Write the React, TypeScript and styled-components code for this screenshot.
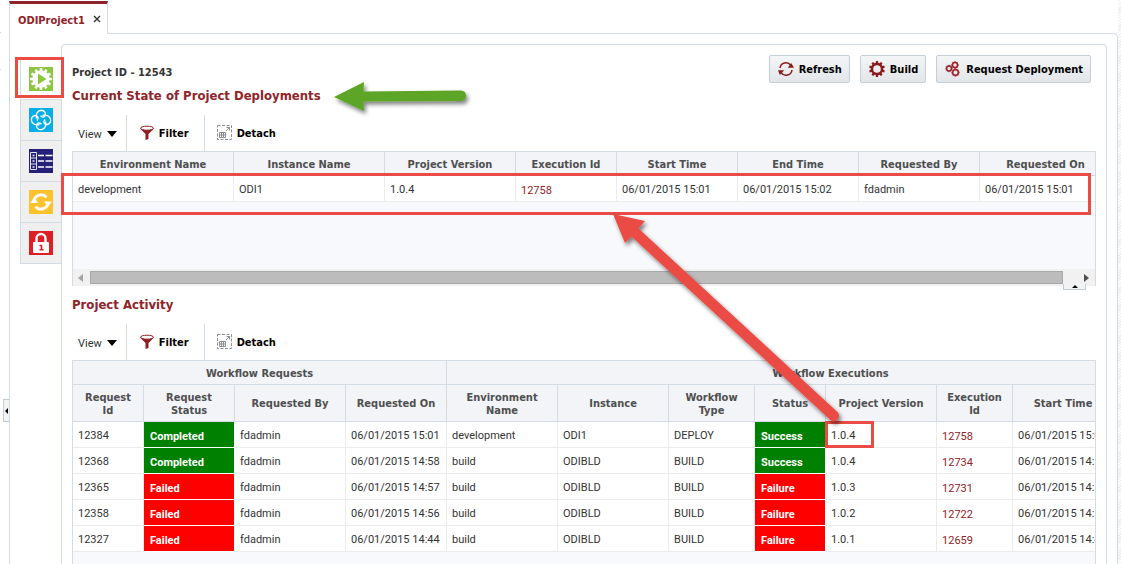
import React from "react";
import styled, { createGlobalStyle, css } from "styled-components";

const line = "#d3dce4";
const maroon = "#8f242a";
const alert = "#ea4b44";
const fonts = `Tahoma, "DejaVu Sans Condensed", "Noto Sans", sans-serif`;
const plainFonts = `Roboto, "Noto Sans", sans-serif`;

const GlobalStyle = createGlobalStyle`
  * { box-sizing: border-box; }
  body {
    margin: 0;
    background: #fff;
    color: #333;
    font: 11px/13px ${fonts};
  }
  button { font: inherit; color: inherit; cursor: pointer; }
`;

const Page = styled.div`
  display: grid;
  grid-template-columns: 9px minmax(0, 1fr) 3px;
  height: 100vh;
  overflow: hidden;
`;

const Gutter = styled.div`
  position: relative;
`;

const GutterPane = styled.div`
  width: 1px;
  height: 38px;
  margin-top: 32px;
  border: solid ${line};
  border-width: 1px 0;
`;

const Collapse = styled.button`
  position: absolute;
  top: 399px;
  right: 0;
  width: 6px;
  height: 23px;
  padding: 0;
  display: flex;
  align-items: center;
  justify-content: center;
  border: 1px solid #c4ccd3;
  border-right: 0;
  background: #f1f3f5;
`;

const Edge = styled.div`
  background: repeating-linear-gradient(135deg, #fff 0 1px, #ededed 1px 2px);
`;

const Workspace = styled.div`
  display: flex;
  flex-direction: column;
  padding-top: 1px;
`;

const DocTab = styled.div`
  position: relative;
  align-self: flex-start;
  display: flex;
  align-items: center;
  gap: 8px;
  height: 33px;
  padding: 2px 6px 0 8px;
  margin-bottom: -1px;
  border: 1px solid ${line};
  border-top: 3px solid ${maroon};
  border-bottom: 0;
  background: #fff;
  color: ${maroon};
  font-weight: bold;
`;

const CloseButton = styled.button`
  display: flex;
  padding: 0 0 2px;
  border: 0;
  background: none;
`;

const Outer = styled.main`
  flex: 1;
  display: flex;
  min-height: 0;
  padding: 10px 10px 0;
  border: 1px solid ${line};
  border-bottom: 0;
  border-top-right-radius: 5px;
`;

const Rail = styled.nav`
  display: flex;
  flex-direction: column;
  width: 41px;
  padding-top: 15px;
`;

const RailTab = styled.button<{ $active?: boolean }>`
  position: relative;
  display: flex;
  align-items: center;
  width: ${(p) => (p.$active ? 42 : 41)}px;
  height: 41px;
  padding: 0 8px;
  border: 1px solid ${line};
  border-width: 0 0 1px 1px;
  background: ${(p) => (p.$active ? "#fff" : "#efefef")};
  z-index: ${(p) => (p.$active ? 1 : 0)};
`;

const Panel = styled.section`
  position: relative;
  flex: 1;
  min-width: 0;
  display: flex;
  flex-direction: column;
  padding: 0 10px;
  border: 1px solid ${line};
  border-bottom: 0;
  border-radius: 4px 4px 0 0;
`;

const TitleBar = styled.header`
  display: flex;
  justify-content: space-between;
  align-items: flex-start;
  height: 70px;
`;

const Titles = styled.div`
  padding-top: 21px;
`;

const ProjectId = styled.div`
  height: 21px;
  line-height: 14px;
  font-weight: bold;
`;

const Heading = styled.h2`
  margin: 0;
  font-size: 13px;
  line-height: 18px;
  color: ${maroon};
`;

const Actions = styled.div`
  display: flex;
  gap: 10px;
  padding: 10px 5px 0 0;
`;

const Action = styled.button`
  display: flex;
  align-items: center;
  gap: 4px;
  height: 28px;
  padding: 0 7px;
  border: 1px solid #c4ced7;
  border-radius: 2px;
  background: linear-gradient(#f3f5f6, #e3e6e9);
  color: #000;
  font-weight: bold;
`;

const Toolbar = styled.div`
  display: flex;
  height: 36px;
`;

const Tool = styled.button<{ $plain?: boolean }>`
  display: flex;
  align-items: center;
  gap: 4px;
  padding: 0 15px 0 12px;
  border: 0;
  background: none;
  color: ${(p) => (p.$plain ? "#333" : "#000")};
  font-weight: ${(p) => (p.$plain ? "normal" : "bold")};
  & + & {
    border-left: 1px solid ${line};
  }
  ${(p) =>
    p.$plain &&
    css`
      gap: 5px;
      padding: 2px 9px 0 6px;
      font-family: ${plainFonts};
    `}
`;

const Section = styled.section<{ $fill?: boolean }>`
  position: relative;
  display: flex;
  flex-direction: column;
  flex: ${(p) => (p.$fill ? "1" : "none")};
  min-height: 0;
`;

const Frame = styled.div<{ $fill?: boolean }>`
  overflow: hidden;
  border: 1px solid ${line};
  border-bottom: 0;
  background: #f8f9fd;
  ${(p) => (p.$fill ? "flex: 1;" : "height: 118px;")}
`;

const Grid = styled.table<{ $width: number }>`
  table-layout: fixed;
  width: ${(p) => p.$width}px;
  border-collapse: separate;
  border-spacing: 0;
`;

const Head = styled.th<{ $tall?: boolean }>`
  height: ${(p) => (p.$tall ? 37 : 24)}px;
  padding: 1px 8px 0;
  border: solid ${line};
  border-width: 0 1px 1px 0;
  background: #f2f4f8;
  color: #4f4f4f;
  text-align: center;
  line-height: 13px;
`;

const Cell = styled.td`
  height: 26px;
  padding: 2px 0 0 5px;
  border: solid #ececec;
  border-width: 0 1px 1px 0;
  background: #fff;
  font-family: ${plainFonts};
  white-space: nowrap;
`;

const StatusCell = styled(Cell)<{ $ok: boolean }>`
  padding: 4px 0 0 6px;
  border-color: #fff;
  background: ${(p) => (p.$ok ? "#008000" : "#f00")};
  background-clip: padding-box;
  color: #fff;
  font-weight: bold;
`;

const IdLink = styled.a`
  display: block;
  padding-top: 1px;
  color: ${maroon};
  text-decoration: none;
`;

const ScrollBar = styled.div`
  display: flex;
  align-items: center;
  height: 17px;
  padding: 0 6px 0 5px;
  border: solid ${line};
  border-width: 0 1px;
  background: #f1f1f1;
`;

const Thumb = styled.div`
  flex: 1;
  height: 13px;
  margin: 0 21px 0 7px;
  border: 1px solid #a8a8a8;
  background: #bcbcbc;
`;

const Splitter = styled.button`
  position: absolute;
  right: 10px;
  bottom: -4px;
  display: flex;
  align-items: center;
  justify-content: center;
  width: 23px;
  height: 6px;
  padding: 0;
  border: 1px solid #c4ccd3;
  border-top: 0;
  background: #f1f3f5;
`;

const SectionTitle = styled.div`
  height: 38px;
  padding-top: 10px;
`;

const Marker = styled.span`
  position: absolute;
  border: 3px solid ${alert};
  pointer-events: none;
  z-index: 2;
`;

const TabMarker = styled(Marker)`
  inset: -2px -2px 1px -6px;
`;

const RowMarker = styled(Marker)`
  top: 58px;
  left: -11px;
  right: 5px;
  height: 42px;
`;

const VersionCell = styled(Cell)`
  position: relative;
  overflow: visible;
`;

const VersionMarker = styled(Marker)`
  top: -1px;
  left: -1px;
  width: 49px;
  height: 27px;
`;

const Arrows = styled.svg`
  position: absolute;
  top: 0;
  left: 0;
  width: 1040px;
  height: 519px;
  pointer-events: none;
  z-index: 3;
`;

const gearPath = (cx: number, cy: number, teeth: number, outer: number, inner: number) => {
  const step = (Math.PI * 2) / teeth;
  const at = (r: number, a: number) =>
    `${(cx + r * Math.cos(a)).toFixed(2)} ${(cy + r * Math.sin(a)).toFixed(2)}`;
  let d = "";
  for (let i = 0; i < teeth; i++) {
    const a = i * step - Math.PI / 2;
    d += `${i ? "L" : "M"}${at(inner, a - step * 0.3)}L${at(outer, a - step * 0.22)}`;
    d += `L${at(outer, a + step * 0.22)}L${at(inner, a + step * 0.3)}`;
  }
  return d + "Z";
};

const RunIcon = () => (
  <svg width="24" height="24" viewBox="0 0 24 24">
    <rect width="24" height="24" fill="#8cc63f" />
    <path d={gearPath(12, 12, 12, 11, 8.6)} fill="#fff" />
    <path d="M9 6.500L17.500 12L9 17.500Z" fill="#8cc63f" />
  </svg>
);

const KnotIcon = () => (
  <svg width="24" height="24" viewBox="0 0 24 24" fill="none" stroke="#fff" strokeWidth="1.400">
    <rect width="24" height="24" fill="#05aee8" stroke="none" />
    {[0, 90, 180, 270].map((turn) => (
      <path
        key={turn}
        transform={`rotate(${turn} 12 12)`}
        d="M7.500 10.500C6.300 6 8.500 2.800 12 2.300C15.800 2.300 17.500 5.500 15.800 8.200C14.600 9.800 12.800 9 11.500 7.800"
      />
    ))}
  </svg>
);

const ListIcon = () => (
  <svg width="24" height="24" viewBox="0 0 24 24" fill="none" stroke="#dfe0f0">
    <rect width="24" height="24" fill="#262178" stroke="none" />
    <path d="M1.500 3.500h6v17h-6zM1.500 9h6M1.500 15h6" />
    <path d="M3.500 6.500h2M3.500 12h2M3.500 18h2" strokeWidth="1.500" />
    <path d="M9 6.500h6m1.500 0h7M9 12h6m1.500 0h7M9 18h6m1.500 0h7" stroke="#fff" strokeWidth="1.500" />
  </svg>
);

const SyncIcon = () => (
  <svg width="24" height="24" viewBox="0 0 24 24" fill="none" stroke="#fff" strokeWidth="3">
    <rect width="24" height="24" fill="#fbc22b" stroke="none" />
    <path d="M4.800 12A7.300 7.300 0 0 1 17.500 7.200M19.200 12A7.300 7.300 0 0 1 6.500 16.800" />
    <path d="M1 13l4.500-5.500L9 13zM15 11.500h8L19 16.500z" fill="#fff" stroke="none" />
  </svg>
);

const LockIcon = () => (
  <svg width="24" height="24" viewBox="0 0 24 24" fill="none">
    <rect width="24" height="24" fill="#dd1f26" />
    <path d="M7.500 12V7.500a4.500 4.500 0 0 1 9 0V12" stroke="#fff" strokeWidth="2.400" />
    <rect x="4" y="11" width="16" height="11" rx="1" fill="#fff" />
    <path d="M10.500 14.500h2v4.500M10.500 18.800h4" stroke="#dd1f26" strokeWidth="1.600" />
  </svg>
);

const RefreshIcon = () => (
  <svg width="18" height="16" viewBox="0 0 18 16" fill="none" stroke="#8b1a1e" strokeWidth="1.500">
    <path d="M3 7A6 6 0 0 1 13.800 4.200M15 9A6 6 0 0 1 4.200 11.800" />
    <path d="M10.800 6.800h6.200l-2.800-4.800zM1 9.200h6.200l-4.400 4.800z" fill="#8b1a1e" stroke="none" />
  </svg>
);

const GearIcon = () => (
  <svg width="18" height="16" viewBox="0 0 18 16">
    <path
      fillRule="evenodd"
      d={gearPath(9, 8, 10, 8, 6.3) + "M9 4.200a3.800 3.800 0 1 0 0 7.600a3.800 3.800 0 1 0 0-7.600Z"}
      fill="#8b1a1e"
    />
  </svg>
);

const GearsIcon = () => (
  <svg width="18" height="16" viewBox="0 0 18 16" fill="none" stroke="#9b2428" strokeWidth="1.500">
    <circle cx="5" cy="7.500" r="2.400" />
    <circle cx="11" cy="4" r="2.500" />
    <circle cx="11.500" cy="11.500" r="2.800" />
    <path
      d={
        gearPath(5, 7.5, 8, 3.4, 2.8) +
        gearPath(11, 4, 8, 3.6, 2.9) +
        gearPath(11.5, 11.5, 8, 4, 3.2)
      }
      strokeWidth="0.500"
    />
  </svg>
);

const FilterIcon = () => (
  <svg width="16" height="16" viewBox="0 0 16 16">
    <path d="M1 3.500L6.500 9v6L9.500 14V9L15 3.500Z" fill="#8f1d22" />
    <ellipse cx="8" cy="3.200" rx="6.500" ry="2" fill="#fff" stroke="#8f1d22" />
  </svg>
);

const DetachIcon = () => (
  <svg width="16" height="16" viewBox="0 0 16 16" fill="none" stroke="#8a8d91">
    <rect x="0.500" y="0.500" width="14" height="14" strokeDasharray="3 1.500" />
    <path d="M2.500 7.500h6v5h-6zM2 10h7M4.500 7v6M6.500 7v6" />
    <path d="M9 6l3.500-3.500M9.500 2.500h3v3" />
  </svg>
);

const Triangle = ({ points, w, h, fill = "#000" }: { points: string; w: number; h: number; fill?: string }) => (
  <svg width={w} height={h} viewBox={`0 0 ${w} ${h}`}>
    <polygon points={points} fill={fill} />
  </svg>
);

const TableTools = () => (
  <Toolbar>
    <Tool $plain>
      View
      <Triangle points="0,0 10,0 5,6" w={10} h={6} />
    </Tool>
    <Tool>
      <FilterIcon />
      Filter
    </Tool>
    <Tool>
      <DetachIcon />
      Detach
    </Tool>
  </Toolbar>
);

const Cols = ({ widths }: { widths: number[] }) => (
  <colgroup>
    {widths.map((w, i) => (
      <col key={i} width={w} />
    ))}
  </colgroup>
);

const sum = (n: number[]) => n.reduce((a, b) => a + b, 0);

const stateCols = [161, 151, 131, 101, 121, 121, 121, 132];
const stateHeads = [
  "Environment Name", "Instance Name", "Project Version", "Execution Id",
  "Start Time", "End Time", "Requested By", "Requested On",
];

const activityCols = [71, 91, 111, 101, 111, 111, 86, 71, 111, 76, 101, 101];
const activityHeads = [
  "Request Id", "Request Status", "Requested By", "Requested On", "Environment Name",
  "Instance", "Workflow Type", "Status", "Project Version", "Execution Id", "Start Time", "",
];

const runs = [
  { id: "12384", request: "Completed", time: "15:01", env: "development", inst: "ODI1", type: "DEPLOY", status: "Success", version: "1.0.4", exec: "12758" },
  { id: "12368", request: "Completed", time: "14:58", env: "build", inst: "ODIBLD", type: "BUILD", status: "Success", version: "1.0.4", exec: "12734" },
  { id: "12365", request: "Failed", time: "14:57", env: "build", inst: "ODIBLD", type: "BUILD", status: "Failure", version: "1.0.3", exec: "12731" },
  { id: "12358", request: "Failed", time: "14:56", env: "build", inst: "ODIBLD", type: "BUILD", status: "Failure", version: "1.0.2", exec: "12722" },
  { id: "12327", request: "Failed", time: "14:44", env: "build", inst: "ODIBLD", type: "BUILD", status: "Failure", version: "1.0.1", exec: "12659" },
];

export default function App() {
  return (
    <>
      <GlobalStyle />
      <Page>
        <Gutter>
          <GutterPane />
          <Collapse aria-label="Collapse pane">
            <Triangle points="3,0 3,6 0,3" w={3} h={6} />
          </Collapse>
        </Gutter>
        <Workspace>
          <DocTab>
            ODIProject1
            <CloseButton aria-label="Close tab">
              <svg width="8" height="8" viewBox="0 0 8 8" stroke="#333" strokeWidth="1.400">
                <path d="M1 1l6 6M7 1l-6 6" />
              </svg>
            </CloseButton>
          </DocTab>
          <Outer>
            <Rail>
              <RailTab $active aria-label="Deployments">
                <RunIcon />
                <TabMarker />
              </RailTab>
              <RailTab aria-label="Workflow"><KnotIcon /></RailTab>
              <RailTab aria-label="Properties"><ListIcon /></RailTab>
              <RailTab aria-label="Synchronize"><SyncIcon /></RailTab>
              <RailTab aria-label="Security"><LockIcon /></RailTab>
            </Rail>
            <Panel>
              <TitleBar>
                <Titles>
                  <ProjectId>Project ID - 12543</ProjectId>
                  <Heading>Current State of Project Deployments</Heading>
                </Titles>
                <Actions>
                  <Action><RefreshIcon />Refresh</Action>
                  <Action><GearIcon />Build</Action>
                  <Action><GearsIcon />Request Deployment</Action>
                </Actions>
              </TitleBar>

              <Section>
                <TableTools />
                <Frame>
                  <Grid $width={sum(stateCols)}>
                    <Cols widths={stateCols} />
                    <thead>
                      <tr>{stateHeads.map((h) => <Head key={h}>{h}</Head>)}</tr>
                    </thead>
                    <tbody>
                      <tr>
                        <Cell>development</Cell>
                        <Cell>ODI1</Cell>
                        <Cell>1.0.4</Cell>
                        <Cell><IdLink href="#12758">12758</IdLink></Cell>
                        <Cell>06/01/2015 15:01</Cell>
                        <Cell>06/01/2015 15:02</Cell>
                        <Cell>fdadmin</Cell>
                        <Cell>06/01/2015 15:01</Cell>
                      </tr>
                    </tbody>
                  </Grid>
                </Frame>
                <ScrollBar>
                  <Triangle points="5,0 5,8 0,4" w={5} h={8} fill="#a3a3a3" />
                  <Thumb />
                  <Triangle points="0,0 0,8 5,4" w={5} h={8} fill="#505050" />
                </ScrollBar>
                <RowMarker />
                <Splitter aria-label="Resize sections">
                  <Triangle points="0,3 6,3 3,0" w={6} h={3} />
                </Splitter>
              </Section>

              <SectionTitle>
                <Heading>Project Activity</Heading>
              </SectionTitle>

              <Section $fill>
                <TableTools />
                <Frame $fill>
                  <Grid $width={sum(activityCols)}>
                    <Cols widths={activityCols} />
                    <thead>
                      <tr>
                        <Head colSpan={4}>Workflow Requests</Head>
                        <Head colSpan={8}>Workflow Executions</Head>
                      </tr>
                      <tr>{activityHeads.map((h) => <Head $tall key={h}>{h}</Head>)}</tr>
                    </thead>
                    <tbody>
                      {runs.map((r, i) => (
                        <tr key={r.id}>
                          <Cell>{r.id}</Cell>
                          <StatusCell $ok={r.request === "Completed"}>{r.request}</StatusCell>
                          <Cell>fdadmin</Cell>
                          <Cell>06/01/2015 {r.time}</Cell>
                          <Cell>{r.env}</Cell>
                          <Cell>{r.inst}</Cell>
                          <Cell>{r.type}</Cell>
                          <StatusCell $ok={r.status === "Success"}>{r.status}</StatusCell>
                          <VersionCell>
                            {r.version}
                            {i === 0 && <VersionMarker />}
                          </VersionCell>
                          <Cell><IdLink href={`#${r.exec}`}>{r.exec}</IdLink></Cell>
                          <Cell>06/01/2015 {r.time}</Cell>
                          <Cell />
                        </tr>
                      ))}
                    </tbody>
                  </Grid>
                </Frame>
              </Section>

              <Arrows viewBox="62 45 1040 519">
                <defs>
                  <filter id="shade" x="-20%" y="-50%" width="140%" height="200%">
                    <feDropShadow dx="2" dy="3" stdDeviation="2" floodColor="#000" floodOpacity="0.5" />
                  </filter>
                </defs>
                <g filter="url(#shade)">
                  <path d="M334 97L364 82L363.500 91.500L461 90.500Q466 91 466 95.500Q466 100.500 461 101L363.500 101.500L364 111Z" fill="#5ba525" />
                  <path d="M613 214L645 221L638.500 228.500L838 412.500Q840 416 838 419Q834.500 422.500 831 420.500L631.500 236.500L625 243Z" fill={alert} />
                </g>
              </Arrows>
            </Panel>
          </Outer>
        </Workspace>
        <Edge />
      </Page>
    </>
  );
}
